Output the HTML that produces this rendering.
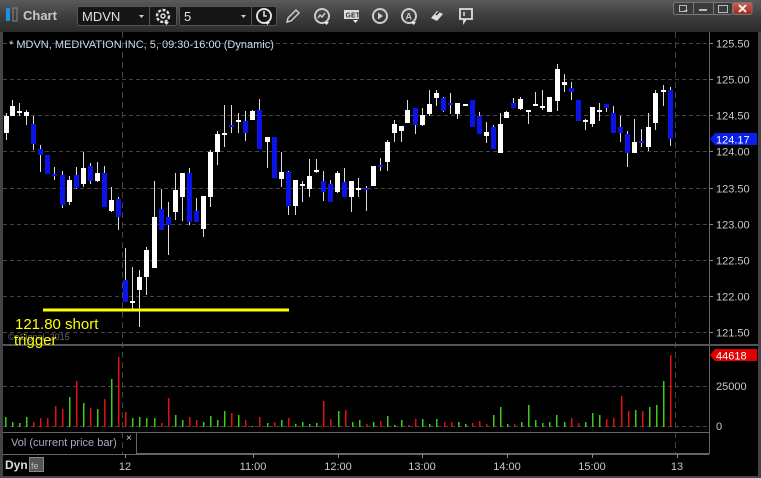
<!DOCTYPE html>
<html><head><meta charset="utf-8">
<style>
html,body{margin:0;padding:0;background:#2b2b2b;}
body{width:761px;height:478px;overflow:hidden;position:relative;font-family:"Liberation Sans",sans-serif;}
</style></head><body>
<svg id="s" width="761" height="478" xmlns="http://www.w3.org/2000/svg" style="position:absolute;left:0;top:0">
<defs>
<linearGradient id="tb" x1="0" y1="0" x2="0" y2="1"><stop offset="0" stop-color="#5a5a5a"/><stop offset="0.5" stop-color="#3e3e3e"/><stop offset="1" stop-color="#2a2a2a"/></linearGradient>
<linearGradient id="rb" x1="0" y1="0" x2="0" y2="1"><stop offset="0" stop-color="#d06050"/><stop offset="1" stop-color="#a02818"/></linearGradient>
</defs>
<rect x="0" y="0" width="761" height="478" fill="#303030"/>
<rect x="0" y="0" width="761" height="32" fill="url(#tb)"/>
<!-- chart icon -->
<rect x="6" y="8" width="4" height="13" fill="#1e90e0"/>
<rect x="13" y="8" width="4" height="13" fill="none" stroke="#888" stroke-width="1"/>
<text x="23" y="20" fill="#c8c8c8" font-size="13" font-weight="bold">Chart</text>
<!-- symbol box -->
<rect x="77.5" y="6.5" width="99" height="19" rx="2" fill="#161616" stroke="#555"/>
<line x1="149.5" y1="6" x2="149.5" y2="26" stroke="#555"/>
<text x="82" y="21" fill="#e0e0e0" font-size="13">MDVN</text>
<path d="M139 15h5l-2.5 3z" fill="#ccc"/>
<circle cx="163" cy="16" r="6" fill="none" stroke="#ddd" stroke-width="2.4" stroke-dasharray="3 1.6"/>
<circle cx="163" cy="16" r="2" fill="none" stroke="#ddd" stroke-width="1.5"/>
<path d="M164 22h5l-2.5 3z" fill="#eee"/>
<rect x="179.5" y="6.5" width="97" height="19" rx="2" fill="#161616" stroke="#555"/>
<line x1="251.5" y1="6" x2="251.5" y2="26" stroke="#555"/>
<text x="184" y="21" fill="#e0e0e0" font-size="13">5</text>
<path d="M241 15h5l-2.5 3z" fill="#ccc"/>
<circle cx="264" cy="16" r="7" fill="none" stroke="#ddd" stroke-width="2"/>
<path d="M264 11v5h3" stroke="#ddd" stroke-width="1.6" fill="none"/>
<path d="M265 22h5l-2.5 3z" fill="#eee"/>
<!-- tool icons -->
<path d="M287 22l1-4 8-8 3 3-8 8z" fill="none" stroke="#ccc" stroke-width="1.5"/>
<circle cx="322" cy="16" r="7" fill="none" stroke="#ccc" stroke-width="2"/>
<path d="M318 18l2-3 2 2 3-4" stroke="#ccc" stroke-width="1.5" fill="none"/>
<path d="M324 22h5l-2.5 3z" fill="#eee"/>
<rect x="344" y="10" width="15" height="9" fill="#ddd"/>
<text x="345.5" y="17.5" fill="#333" font-size="7" font-weight="bold">GET</text>
<path d="M353 20h5l-2.5 3z" fill="#eee"/>
<circle cx="380" cy="16" r="7" fill="none" stroke="#ccc" stroke-width="2"/>
<path d="M378 12.5v7l5-3.5z" fill="#ccc"/>
<circle cx="409" cy="16" r="7" fill="none" stroke="#ccc" stroke-width="2"/>
<text x="405.5" y="19.5" fill="#ccc" font-size="9" font-weight="bold">A</text>
<path d="M411 22h5l-2.5 3z" fill="#eee"/>
<path d="M431 18l6-7 6 3-6 7z" fill="#ddd"/>
<path d="M436 15l3-3" stroke="#222" stroke-width="1.5"/>
<path d="M460 9h12v10h-6l-2 3v-3h-4z" fill="none" stroke="#ddd" stroke-width="1.8"/>
<line x1="464" y1="12" x2="464" y2="16" stroke="#ddd" stroke-width="1.5"/>
<!-- window buttons -->
<rect x="673.5" y="2.5" width="59" height="12" rx="2" fill="#3a3a3a" stroke="#777"/>
<line x1="693.5" y1="3" x2="693.5" y2="14" stroke="#777"/>
<line x1="713.5" y1="3" x2="713.5" y2="14" stroke="#777"/>
<rect x="679.5" y="5.5" width="7" height="6" fill="none" stroke="#bbb"/>
<path d="M684 10h4l-2 2z" fill="#bbb"/>
<rect x="699" y="9" width="8" height="2" fill="#bbb"/>
<rect x="718.5" y="5.5" width="9" height="7" fill="none" stroke="#bbb"/>
<rect x="733" y="2.5" width="19" height="12" rx="2" fill="url(#rb)" stroke="#777"/>
<path d="M739 5l7 7M746 5l-7 7" stroke="#eee" stroke-width="2"/>
<!-- chart area -->
<rect x="3" y="32" width="755" height="444" fill="#000"/>
<g id="grid" stroke="#444" stroke-dasharray="4 3" stroke-width="1"></g>
<line x1="122.5" y1="32" x2="122.5" y2="454" stroke="#444" stroke-dasharray="6 4"/>
<line x1="675.5" y1="32" x2="675.5" y2="454" stroke="#444" stroke-dasharray="6 4"/>
<line x1="709.5" y1="32" x2="709.5" y2="454" stroke="#666"/>
<rect x="3" y="344" width="755" height="2" fill="#555"/>
<line x1="3" y1="432.5" x2="709" y2="432.5" stroke="#666"/>
<line x1="3" y1="454.5" x2="709" y2="454.5" stroke="#666"/>
<rect x="3" y="455" width="755" height="21" fill="#000"/>
<rect x="0" y="476" width="761" height="2" fill="#444"/>
<rect x="0" y="32" width="3" height="444" fill="#444"/>
<rect x="758" y="32" width="3" height="444" fill="#444"/>
<g id="c"></g>
<g id="v"></g>
<g id="ax" fill="#c8c8c8" font-size="11"></g>
<text x="9" y="48" fill="#cde" font-size="11">* MDVN, MEDIVATION INC, 5, 09:30-16:00 (Dynamic)</text>
<line x1="43" y1="310" x2="289" y2="310" stroke="#ffff00" stroke-width="3"/>
<text x="8" y="340" fill="#666" font-size="9">©eSignal, 2015</text>
<text x="15" y="329" fill="#ffff00" font-size="15">121.80 short</text>
<text x="14" y="345" fill="#ffff00" font-size="15">trigger</text>
<path d="M710 139l5-6h42v12h-42z" fill="#0a1ef0"/>
<text x="716" y="143.5" fill="#fff" font-size="11">124.17</text>
<path d="M710 355l5-6h42v12h-42z" fill="#e00000"/>
<text x="716" y="359.5" fill="#fff" font-size="11">44618</text>
<text x="716" y="390" fill="#c8c8c8" font-size="11">25000</text>
<text x="716" y="430" fill="#c8c8c8" font-size="11">0</text>
<rect x="136.5" y="432.5" width="573" height="21" fill="none" stroke="#666"/>
<text x="11" y="446" fill="#aac" font-size="11">Vol (current price bar)</text>
<text x="126" y="441" fill="#ccc" font-size="10">×</text>
<text x="5" y="469" fill="#ddd" font-size="12" font-weight="bold">Dyn</text>
<rect x="29.5" y="457.5" width="14" height="14" fill="#555" stroke="#888"/>
<text x="31" y="469" fill="#bbb" font-size="9">fe</text>
<g id="t" fill="#c8c8c8" font-size="11" text-anchor="middle"></g>
</svg>
<script>
var NS="http://www.w3.org/2000/svg";
function el(p,t,a){var e=document.createElementNS(NS,t);for(var k in a)e.setAttribute(k,a[k]);document.getElementById(p).appendChild(e);return e;}
function Y(p){return 43+(125.5-p)*72.3;}
var ax=document.getElementById('ax');
for(var p=125.5;p>=121.49;p-=0.5){var y=Math.round(Y(p))+0.5;el('grid','line',{x1:3,y1:y,x2:709,y2:y});el('ax','line',{x1:709,y1:y,x2:713,y2:y,stroke:'#888'});var tx=el('ax','text',{x:716,y:y+4});tx.textContent=p.toFixed(2);}
el('grid','line',{x1:3,y1:386.5,x2:709,y2:386.5});el('grid','line',{x1:3,y1:426.5,x2:709,y2:426.5});
var C=[[6,'w',116,133,113,140],[12,'w',106,116,100,116],[19,'w',111,113,103,116],[26,'w',112,116,110,125],[33,'b',124,144,116,150],[40,'b',149,155,145,172],[47,'b',155,174,155,174],[54,'b',174,176,167,180],[62,'b',175,205,171,208],[69,'w',180,202,176,205],[76,'b',175,188,167,189],[83,'w',168,184,152,187],[90,'b',166,181,163,184],[97,'w',173,181,162,182],[104,'b',173,207,166,207],[111,'w',200,211,187,212],[118,'b',199,217,197,230],[125,'b',280,302,248,302],[132,'w',301,303,267,310],[139,'w',277,290,270,327],[146,'w',250,277,247,295],[154,'w',217,268,181,268],[161,'b',209,230,189,230],[168,'b',217,225,202,255],[175,'w',190,212,173,220],[182,'w',173,197,173,221],[189,'b',173,222,168,225],[196,'b',211,222,198,222],[203,'w',196,229,196,237],[210,'w',152,197,150,207],[217,'w',134,152,131,165],[224,'w',133,135,105,147],[231,'b',125,127,105,133],[238,'w',120,122,113,133],[245,'b',121,133,111,141],[252,'w',111,120,110,120],[259,'b',110,149,99,149],[267,'w',137,142,137,168],[274,'b',137,178,137,178],[281,'w',172,179,152,187],[288,'b',172,206,171,215],[295,'w',180,206,180,215],[302,'w',184,186,181,202],[309,'w',176,189,159,197],[316,'w',170,172,159,173],[323,'b',181,192,171,201],[330,'b',184,202,180,202],[337,'w',173,192,171,193],[344,'b',182,197,168,197],[351,'w',181,197,181,212],[358,'w',188,190,178,197],[366,'b',188,190,186,211],[373,'w',166,186,166,186],[380,'b',165,167,158,171],[387,'w',142,162,140,171],[394,'w',124,133,120,142],[401,'w',126,131,126,142],[407,'w',110,123,100,123],[415,'b',108,125,108,134],[422,'w',115,125,108,126],[429,'w',104,114,90,116],[436,'w',93,98,90,106],[443,'b',98,111,97,112],[450,'b',103,105,93,114],[457,'w',103,114,103,119],[465,'w',104,106,104,106],[472,'b',100,127,100,127],[479,'b',116,134,112,134],[486,'w',132,136,122,143],[493,'b',127,149,125,149],[500,'w',124,153,113,153],[506,'w',112,118,111,118],[513,'b',103,108,98,108],[520,'w',99,109,97,110],[528,'w',110,112,110,124],[535,'w',104,106,92,106],[542,'w',106,108,90,110],[549,'w',97,112,97,112],[557,'w',69,101,64,111],[564,'w',82,85,74,92],[571,'b',88,92,82,100],[578,'b',100,121,100,121],[585,'w',120,122,119,130],[592,'w',107,124,107,127],[599,'w',110,112,103,121],[606,'b',104,108,104,112],[613,'b',113,133,106,133],[620,'b',127,133,116,142],[627,'b',134,153,131,167],[634,'w',142,153,119,153],[641,'b',141,143,129,147],[648,'w',127,147,113,151],[655,'w',93,123,90,130],[663,'w',90,92,85,106],[670,'b',90,139,87,146]];
C.forEach(function(c){var col=c[1]=='w'?'#fff':'#0a14e6';el('c','line',{x1:c[0]+0.5,y1:c[4],x2:c[0]+0.5,y2:c[5],stroke:'#ddd','stroke-width':1});el('c','rect',{x:c[0]-2,y:c[2],width:5,height:Math.max(2,c[3]-c[2]),fill:col});});
var V=[[5,10,'g'],[12,5,'g'],[19,4,'g'],[26,10,'g'],[33,5,'r'],[40,9,'r'],[47,9,'r'],[55,21,'r'],[62,18,'r'],[69,30,'g'],[76,46,'r'],[83,24,'g'],[90,19,'r'],[97,18,'g'],[104,28,'r'],[111,48,'g'],[118,70,'r'],[125,15,'r'],[132,9,'g'],[139,10,'g'],[146,9,'g'],[154,9,'g'],[161,4,'r'],[168,29,'r'],[175,12,'g'],[182,7,'g'],[189,10,'r'],[196,7,'r'],[203,5,'g'],[210,11,'g'],[217,7,'g'],[224,16,'g'],[231,14,'r'],[238,12,'g'],[245,7,'r'],[252,1,'g'],[259,10,'r'],[267,4,'g'],[274,5,'r'],[281,7,'g'],[288,9,'r'],[295,3,'g'],[302,5,'g'],[309,3,'g'],[316,4,'g'],[323,26,'r'],[330,8,'r'],[338,16,'g'],[345,17,'r'],[352,5,'g'],[359,7,'g'],[366,3,'r'],[373,5,'g'],[380,6,'r'],[387,11,'g'],[394,2,'g'],[401,7,'g'],[408,2,'r'],[415,8,'r'],[422,8,'g'],[429,3,'g'],[436,8,'g'],[444,5,'r'],[451,5,'r'],[458,5,'g'],[465,3,'g'],[472,4,'r'],[479,6,'r'],[486,3,'r'],[493,12,'g'],[500,20,'g'],[507,3,'g'],[514,3,'r'],[521,5,'g'],[528,22,'g'],[535,7,'g'],[542,4,'g'],[549,5,'g'],[556,12,'g'],[564,5,'g'],[571,9,'r'],[578,4,'r'],[585,5,'g'],[592,14,'g'],[599,12,'g'],[606,8,'r'],[613,9,'r'],[621,31,'r'],[628,16,'r'],[635,17,'g'],[642,16,'r'],[649,20,'g'],[656,22,'g'],[663,46,'g'],[670,72,'r']];
V.forEach(function(v){el('v','rect',{x:v[0],y:427-v[1],width:1.5,height:v[1],fill:v[2]=='g'?'#3ccc14':'#e01010'});});
[[125,'12'],[253,'11:00'],[338,'12:00'],[422,'13:00'],[507,'14:00'],[592,'15:00'],[677,'13']].forEach(function(t){el('t','line',{x1:t[0]+0.5,y1:454,x2:t[0]+0.5,y2:458,stroke:'#888'});var e=el('t','text',{x:t[0],y:470});e.textContent=t[1];});
</script>
</body></html>
